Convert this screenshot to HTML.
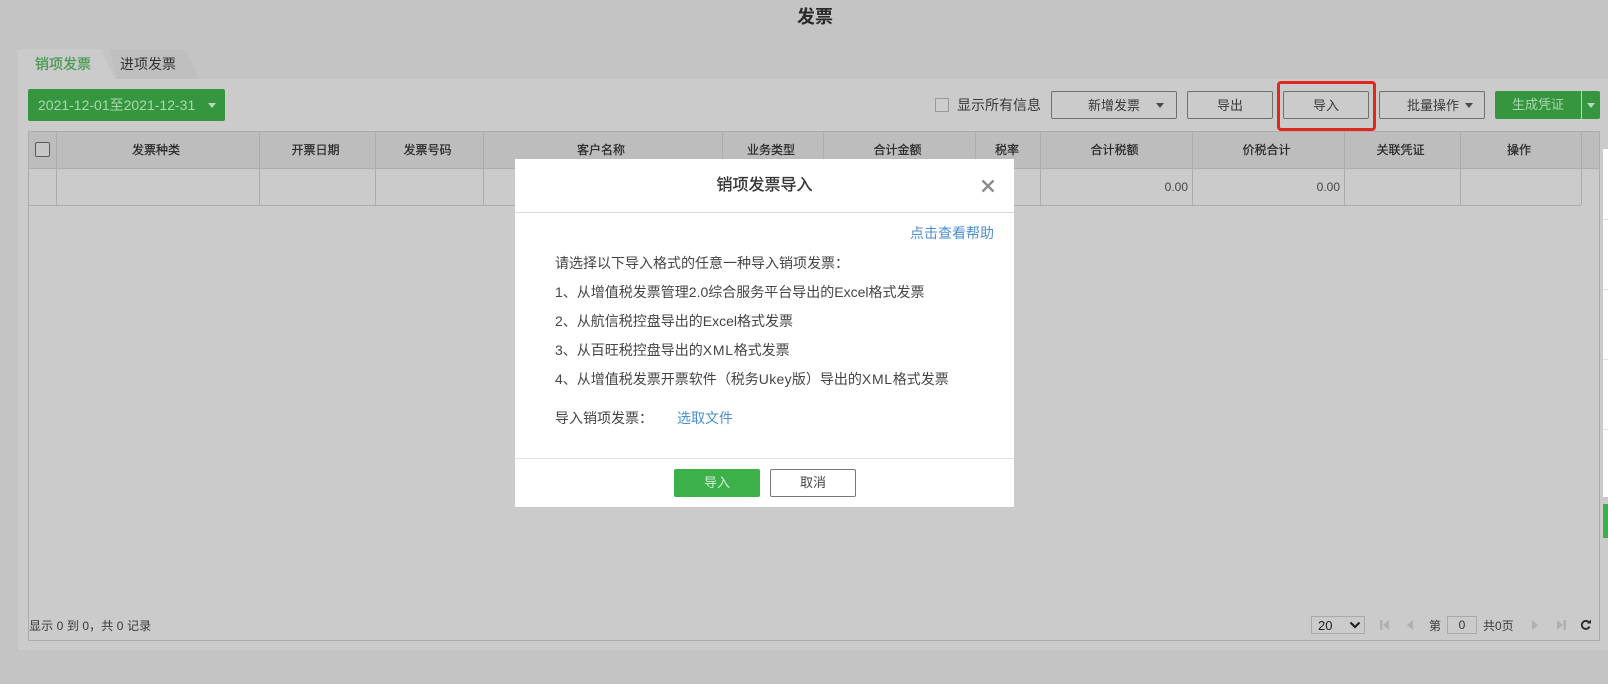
<!DOCTYPE html>
<html lang="zh-CN"><head><meta charset="utf-8"><title>发票</title>
<style>
html,body{margin:0;padding:0}
body{width:1608px;height:684px;position:relative;overflow:hidden;background:#c4c4c4;font-family:"Liberation Sans","Noto Sans CJK SC",sans-serif;color:#333}
div,span,a{position:absolute;white-space:nowrap;box-sizing:border-box}
i{font-style:normal}
.btn{top:91px;height:28px;border:1px solid #6f6f6f;border-radius:2px;background:#cbcbcb;font-size:13px;line-height:27px;text-align:center;color:#3a3a3a}
.v{width:1px;background:#adadad}
.h{top:132px;height:37px;font-size:12px;line-height:37px;text-align:center;color:#2a2a2a;-webkit-text-stroke:.25px #2a2a2a}
.l{left:555px;height:20px;font-size:14px;line-height:20px;color:#444}
.car{width:0;height:0;border-left:4px solid transparent;border-right:4px solid transparent;border-top:5px solid #4a4a4a}
svg{position:absolute;display:block}
</style></head><body>

<div style="left:797px;top:5px;font-size:18px;line-height:24px;font-weight:bold;color:#2a2a2a">发票</div>

<div style="left:18px;top:79px;width:1590px;height:571px;background:#cbcbcb"></div>
<svg style="left:18px;top:49px" width="190" height="30" viewBox="0 0 190 30">
<path d="M92 1H165Q168 1 169 3L181 30H99L92 3Q91.500 1 92 1Z" fill="#bfbfbf"/>
<path d="M0 30V5Q0 0 5 0H80Q83 0 84 3L97 30Z" fill="#cbcbcb"/>
</svg>
<div style="left:35px;top:54px;font-size:14px;line-height:20px;color:#4c9c56;-webkit-text-stroke:.35px #4c9c56">销项发票</div>
<div style="left:120px;top:54px;font-size:14px;line-height:20px;color:#333">进项发票</div>

<div style="left:28px;top:89px;width:197px;height:32px;background:#36963f;border-radius:2px"></div>
<div style="left:38px;top:95px;font-size:14px;line-height:20px;color:#a9d8ae">2021-12-01至2021-12-31</div>
<div class="car" style="left:208px;top:103px;border-top-color:#b5d8b9"></div>

<div style="left:935px;top:98px;width:14px;height:14px;border:1px solid #9a9a9a;background:#cdcdcd"></div>
<div style="left:957px;top:95px;font-size:14px;line-height:20px;color:#3a3a3a">显示所有信息</div>

<div class="btn" style="left:1051px;width:126px;text-align:left;padding-left:36px">新增发票</div>
<div class="car" style="left:1156px;top:103px"></div>
<div class="btn" style="left:1187px;width:86px">导出</div>
<div class="btn" style="left:1283px;width:86px">导入</div>
<div class="btn" style="left:1379px;width:106px;text-align:left;padding-left:27px">批量操作</div>
<div class="car" style="left:1465px;top:103px"></div>
<div style="left:1495px;top:91px;width:86px;height:28px;background:#36963f;border-radius:2px 0 0 2px;font-size:13px;line-height:28px;text-align:center;color:#a9d8ae">生成凭证</div>
<div style="left:1582px;top:91px;width:18px;height:28px;background:#36963f;border-radius:0 2px 2px 0"></div>
<div class="car" style="left:1587px;top:103px;border-top-color:#b5d8b9"></div>

<div style="left:1277px;top:81px;width:99px;height:50px;border:3px solid #e0281f;border-radius:4px"></div>

<!-- table -->
<div style="left:28px;top:131px;width:1572px;height:510px;border:1px solid #adadad;border-radius:1px"></div>
<div style="left:29px;top:132px;width:1570px;height:36px;background:#bdbdbd"></div>
<div style="left:29px;top:168px;width:1570px;height:1px;background:#adadad"></div>
<div style="left:29px;top:205px;width:1552px;height:1px;background:#adadad"></div>
<div class="v" style="left:56px;top:132px;height:73px"></div>
<div class="v" style="left:259px;top:132px;height:73px"></div>
<div class="v" style="left:375px;top:132px;height:73px"></div>
<div class="v" style="left:483px;top:132px;height:73px"></div>
<div class="v" style="left:722px;top:132px;height:73px"></div>
<div class="v" style="left:823px;top:132px;height:73px"></div>
<div class="v" style="left:975px;top:132px;height:73px"></div>
<div class="v" style="left:1040px;top:132px;height:73px"></div>
<div class="v" style="left:1192px;top:132px;height:73px"></div>
<div class="v" style="left:1344px;top:132px;height:73px"></div>
<div class="v" style="left:1460px;top:132px;height:73px"></div>
<div class="v" style="left:1581px;top:132px;height:73px"></div>

<div style="left:35px;top:142px;width:15px;height:15px;border:1px solid #5a5a5a;border-radius:2px;background:#c6c6c6"></div>
<div class="h" style="left:55px;width:202px">发票种类</div>
<div class="h" style="left:258px;width:115px">开票日期</div>
<div class="h" style="left:374px;width:107px">发票号码</div>
<div class="h" style="left:482px;width:238px">客户名称</div>
<div class="h" style="left:721px;width:100px">业务类型</div>
<div class="h" style="left:822px;width:151px">合计金额</div>
<div class="h" style="left:975px;width:64px">税率</div>
<div class="h" style="left:1039px;width:151px">合计税额</div>
<div class="h" style="left:1191px;width:151px">价税合计</div>
<div class="h" style="left:1343px;width:115px">关联凭证</div>
<div class="h" style="left:1459px;width:120px">操作</div>
<div style="left:1100px;top:177px;width:88px;text-align:right;font-size:12px;line-height:20px;color:#444">0.00</div>
<div style="left:1252px;top:177px;width:88px;text-align:right;font-size:12px;line-height:20px;color:#444">0.00</div>

<!-- footer -->
<div style="left:29px;top:616px;font-size:12px;line-height:20px;letter-spacing:.1px;color:#3a3a3a">显示 0 到 0，共 0 记录</div>
<div style="left:1311px;top:616px;width:54px;height:18px;border:1px solid #a9a9a9;font-size:13px;line-height:17px;padding-left:6px;color:#222">20</div>
<svg style="left:1349px;top:621px" width="12" height="9" viewBox="0 0 12 9"><path d="M1.500 1.500L6 6L10.500 1.500" fill="none" stroke="#222" stroke-width="2.200"/></svg>
<svg style="left:1379px;top:619px" width="12" height="12" viewBox="0 0 12 12"><path d="M1 1H3.500V11H1ZM10 1V11L4 6Z" fill="#b0b0b0"/></svg>
<svg style="left:1406px;top:619px" width="9" height="12" viewBox="0 0 9 12"><path d="M7 1V11L1 6Z" fill="#b0b0b0"/></svg>
<div style="left:1429px;top:616px;font-size:12px;line-height:20px;color:#3a3a3a">第</div>
<div style="left:1447px;top:616px;width:30px;height:18px;border:1px solid #a9a9a9;font-size:12px;line-height:16px;text-align:center;color:#333">0</div>
<div style="left:1483px;top:616px;font-size:12px;line-height:20px;color:#3a3a3a">共0页</div>
<svg style="left:1530px;top:619px" width="9" height="12" viewBox="0 0 9 12"><path d="M2 1V11L8 6Z" fill="#b0b0b0"/></svg>
<svg style="left:1555px;top:619px" width="12" height="12" viewBox="0 0 12 12"><path d="M2 1V11L8 6ZM8.500 1H11V11H8.500Z" fill="#b0b0b0"/></svg>
<svg style="left:1580px;top:619px" width="12" height="12" viewBox="0 0 12 12"><path d="M9.500 7.500A4 4 0 1 1 9 3.500" fill="none" stroke="#2a2a2a" stroke-width="1.800"/><path d="M7 4.500H11V0.500Z" fill="#2a2a2a"/></svg>

<!-- right strip -->
<div style="left:1603px;top:149px;width:5px;height:348px;background:#fff"></div>
<div style="left:1603px;top:219px;width:5px;height:1px;background:#e2e2e2"></div>
<div style="left:1603px;top:289px;width:5px;height:1px;background:#e2e2e2"></div>
<div style="left:1603px;top:359px;width:5px;height:1px;background:#e2e2e2"></div>
<div style="left:1603px;top:429px;width:5px;height:1px;background:#e2e2e2"></div>
<div style="left:1603px;top:504px;width:5px;height:34px;background:#3cb14a"></div>

<!-- dialog -->
<div style="left:515px;top:159px;width:499px;height:348px;background:#fff"></div>
<div style="left:515px;top:212px;width:499px;height:1px;background:#d8d8d8"></div>
<div style="left:515px;top:458px;width:499px;height:1px;background:#e2e2e2"></div>
<div style="left:515px;top:173px;width:499px;text-align:center;line-height:26px;font-size:16px;color:#333;-webkit-text-stroke:.3px #333">销项发票导入</div>
<svg style="left:981px;top:179px" width="14" height="14" viewBox="0 0 14 14"><path d="M1.500 1.500L12.500 12.500M12.500 1.500L1.500 12.500" stroke="#8c8c8c" stroke-width="2.400"/></svg>
<div style="left:910px;top:223px;font-size:14px;line-height:20px;color:#4a8fd0">点击查看帮助</div>
<div class="l" style="top:253px">请选择以下导入格式的任意一种导入销项发票：</div>
<div class="l" style="top:282px">1、从增值税发票管理2.0综合服务平台导出的Excel格式发票</div>
<div class="l" style="top:311px">2、从航信税控盘导出的Excel格式发票</div>
<div class="l" style="top:340px">3、从百旺税控盘导出的<i style="letter-spacing:.7px">XML</i>格式发票</div>
<div class="l" style="top:369px">4、从增值税发票开票软件（税务<i style="letter-spacing:.3px">Ukey</i>版）导出的<i style="letter-spacing:.7px">XML</i>格式发票</div>
<div class="l" style="top:408px">导入销项发票：</div>
<div style="left:677px;top:408px;font-size:14px;line-height:20px;color:#4a8fd0">选取文件</div>
<div style="left:674px;top:469px;width:86px;height:28px;background:#3cb14a;border-radius:2px;font-size:13px;line-height:28px;text-align:center;color:#d8f0db">导入</div>
<div style="left:770px;top:469px;width:86px;height:28px;border:1px solid #777;border-radius:2px;background:#fff;font-size:13px;line-height:26px;text-align:center;color:#444">取消</div>

</body></html>
